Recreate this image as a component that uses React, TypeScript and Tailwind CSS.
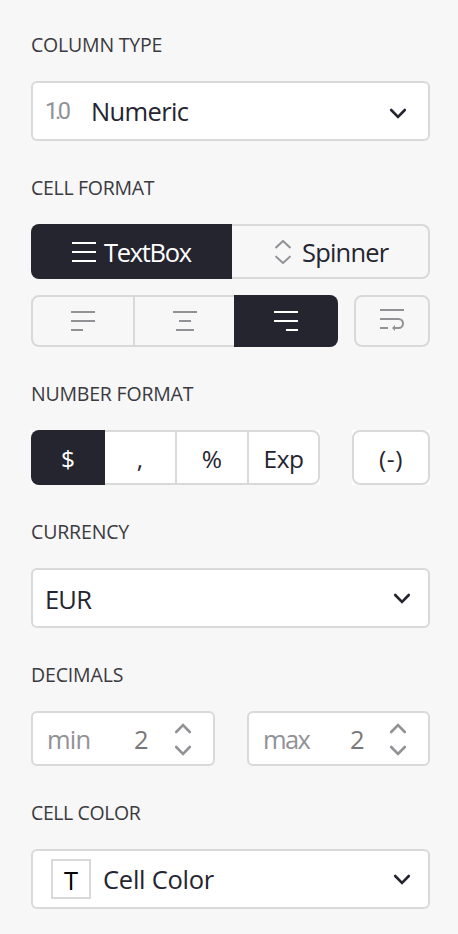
import type { ReactNode } from "react";

const INK = "#252530";
const MUTED = "#919196";

function Section({ title, tracking, children }: { title: string; tracking: string; children: ReactNode }) {
  return (
    <section>
      <h2 className={`mb-[22px] h-7 whitespace-nowrap text-[19.5px] leading-7 text-[#3a3a3f] ${tracking}`}>
        {title}
      </h2>
      {children}
    </section>
  );
}

function Chevron({ up = false, color = INK, width = 2.6 }: { up?: boolean; color?: string; width?: number }) {
  return (
    <svg width="18" height="11" viewBox="0 0 18 11" fill="none" stroke={color} strokeWidth={width} strokeLinecap="round" className="shrink-0">
      <path d={up ? "M2.2 9 9 2.2 15.8 9" : "M2.2 2 9 8.8 15.8 2"} />
    </svg>
  );
}

function Lines({ d, color }: { d: string; color: string }) {
  return (
    <svg width="24" height="20" viewBox="0 0 24 20" fill="none" stroke={color} strokeWidth="2" className="shrink-0">
      <path d={d} />
    </svg>
  );
}

function Select({ children, arrow = "mr-[17px]" }: { children: ReactNode; arrow?: string }) {
  return (
    <div className="flex h-[60px] items-center rounded-md border-2 border-[#d9d9d9] bg-white">
      {children}
      <span className={`ml-auto ${arrow}`}>
        <Chevron />
      </span>
    </div>
  );
}

function Stepper({ label, width, valueWidth, tracking }: { label: string; width: string; valueWidth: string; tracking: string }) {
  return (
    <div className={`flex h-[55px] items-center rounded-md border-2 border-[#d9d9d9] bg-white pl-[14px] ${width}`}>
      <span className={`w-[87px] pt-px whitespace-nowrap text-[#919196] ${tracking}`}>{label}</span>
      <span className={`pt-px text-[#77777a] ${valueWidth}`}>2</span>
      <span className="flex flex-col gap-[11px] pt-px">
        <Chevron up color={MUTED} />
        <Chevron color={MUTED} />
      </span>
    </div>
  );
}

export default function App() {
  return (
    <main className="flex h-[934px] w-[458px] flex-col gap-[33px] bg-[#f7f7f7] pt-[31px] pr-7 pl-[31px] font-['Open_Sans','Noto_Sans',sans-serif] text-[25.5px] leading-9 font-normal text-[#252530]">
      <Section title="COLUMN TYPE" tracking="tracking-[-0.2px]">
        <Select arrow="mr-[21px] mt-1">
          <span className="w-[58px] pl-3 font-['Roboto',sans-serif] text-[23.5px] tracking-[-3.3px] text-[#919196]">1.0</span>
          <span className="tracking-[-0.65px]">Numeric</span>
        </Select>
      </Section>

      <Section title="CELL FORMAT" tracking="tracking-[-0.3px]">
        <div className="flex h-[55px]">
          <button className="flex w-[201px] items-center rounded-l-lg bg-[#252530] pl-[41px] text-white">
            <Lines color="#fff" d="M0 1h24M0 10h24M0 19h24" />
            <span className="pt-px pl-2 tracking-[-1.3px]">TextBox</span>
          </button>
          <button className="flex flex-1 items-center rounded-r-lg border-2 border-l-0 border-[#d9d9d9] pl-[43px]">
            <svg width="16" height="24" viewBox="0 0 16 24" fill="none" stroke={MUTED} strokeWidth="2">
              <path d="m.5 8 7.5-7 7.5 7M.5 16.2 8 23l7.5-6.8" />
            </svg>
            <span className="pt-px pl-[11px] tracking-[-0.8px]">Spinner</span>
          </button>
        </div>
        <div className="mt-4 flex h-[52px]">
          <button className="flex w-[104px] items-center justify-center rounded-l-lg border-2 border-[#d9d9d9]">
            <Lines color={MUTED} d="M0 1h24M0 10h24M0 19h12" />
          </button>
          <button className="flex w-[99px] items-center justify-center border-y-2 border-[#d9d9d9]">
            <Lines color={MUTED} d="M0 1h24M6 10h12M3 19h18" />
          </button>
          <button className="flex w-[104px] items-center justify-center rounded-r-lg bg-[#252530]">
            <Lines color="#fff" d="M0 1h24M0 10h24M12 19h12" />
          </button>
          <button className="ml-4 flex flex-1 items-center justify-center rounded-lg border-2 border-[#d9d9d9]">
            <svg width="24" height="24" viewBox="0 0 24 24" fill="none" stroke={MUTED} strokeWidth="2">
              <path d="M0 1h24M0 10h18.5a4.5 4.5 0 0 1 0 9H13M0 19h8" />
              <path d="m12 19 3-3v6z" fill={MUTED} stroke="none" />
            </svg>
          </button>
        </div>
      </Section>

      <Section title="NUMBER FORMAT" tracking="tracking-[-0.2px]">
        <div className="flex h-[55px] text-[24.5px]">
          <div className="flex w-[289px] bg-white">
            <button className="w-[74px] rounded-l-lg bg-[#252530] pt-[2px] text-white">$</button>
            <button className="w-[72px] border-2 border-l-0 border-[#d9d9d9] pt-[2px]">,</button>
            <button className="w-[72px] border-y-2 border-r-2 border-[#d9d9d9] pt-[2px]">%</button>
            <button className="flex-1 rounded-r-lg border-2 border-l-0 border-[#d9d9d9] pt-[2px] tracking-[-0.5px]">Exp</button>
          </div>
          <div className="ml-8 flex flex-1 bg-white">
            <button className="flex-1 rounded-lg border-2 border-[#d9d9d9] pt-[2px] tracking-[0.5px]">(-)</button>
          </div>
        </div>
      </Section>

      <Section title="CURRENCY" tracking="tracking-[-0.15px]">
        <Select>
          <span className="pt-[2px] pl-3 tracking-[-0.8px]">EUR</span>
        </Select>
      </Section>

      <Section title="DECIMALS" tracking="tracking-[-0.15px]">
        <div className="flex justify-between">
          <Stepper label="min" width="w-[184px]" valueWidth="w-[40px]" tracking="tracking-[-0.8px]" />
          <Stepper label="max" width="w-[183px]" valueWidth="w-[39px]" tracking="tracking-[-1.6px]" />
        </div>
      </Section>

      <Section title="CELL COLOR" tracking="tracking-[-0.4px]">
        <Select>
          <span className="mr-3 ml-[18px] flex h-10 w-10 items-center justify-center border-2 border-[#d9d9d9] pt-px text-black">T</span>
          <span className="tracking-[-0.25px]">Cell Color</span>
        </Select>
      </Section>
    </main>
  );
}
